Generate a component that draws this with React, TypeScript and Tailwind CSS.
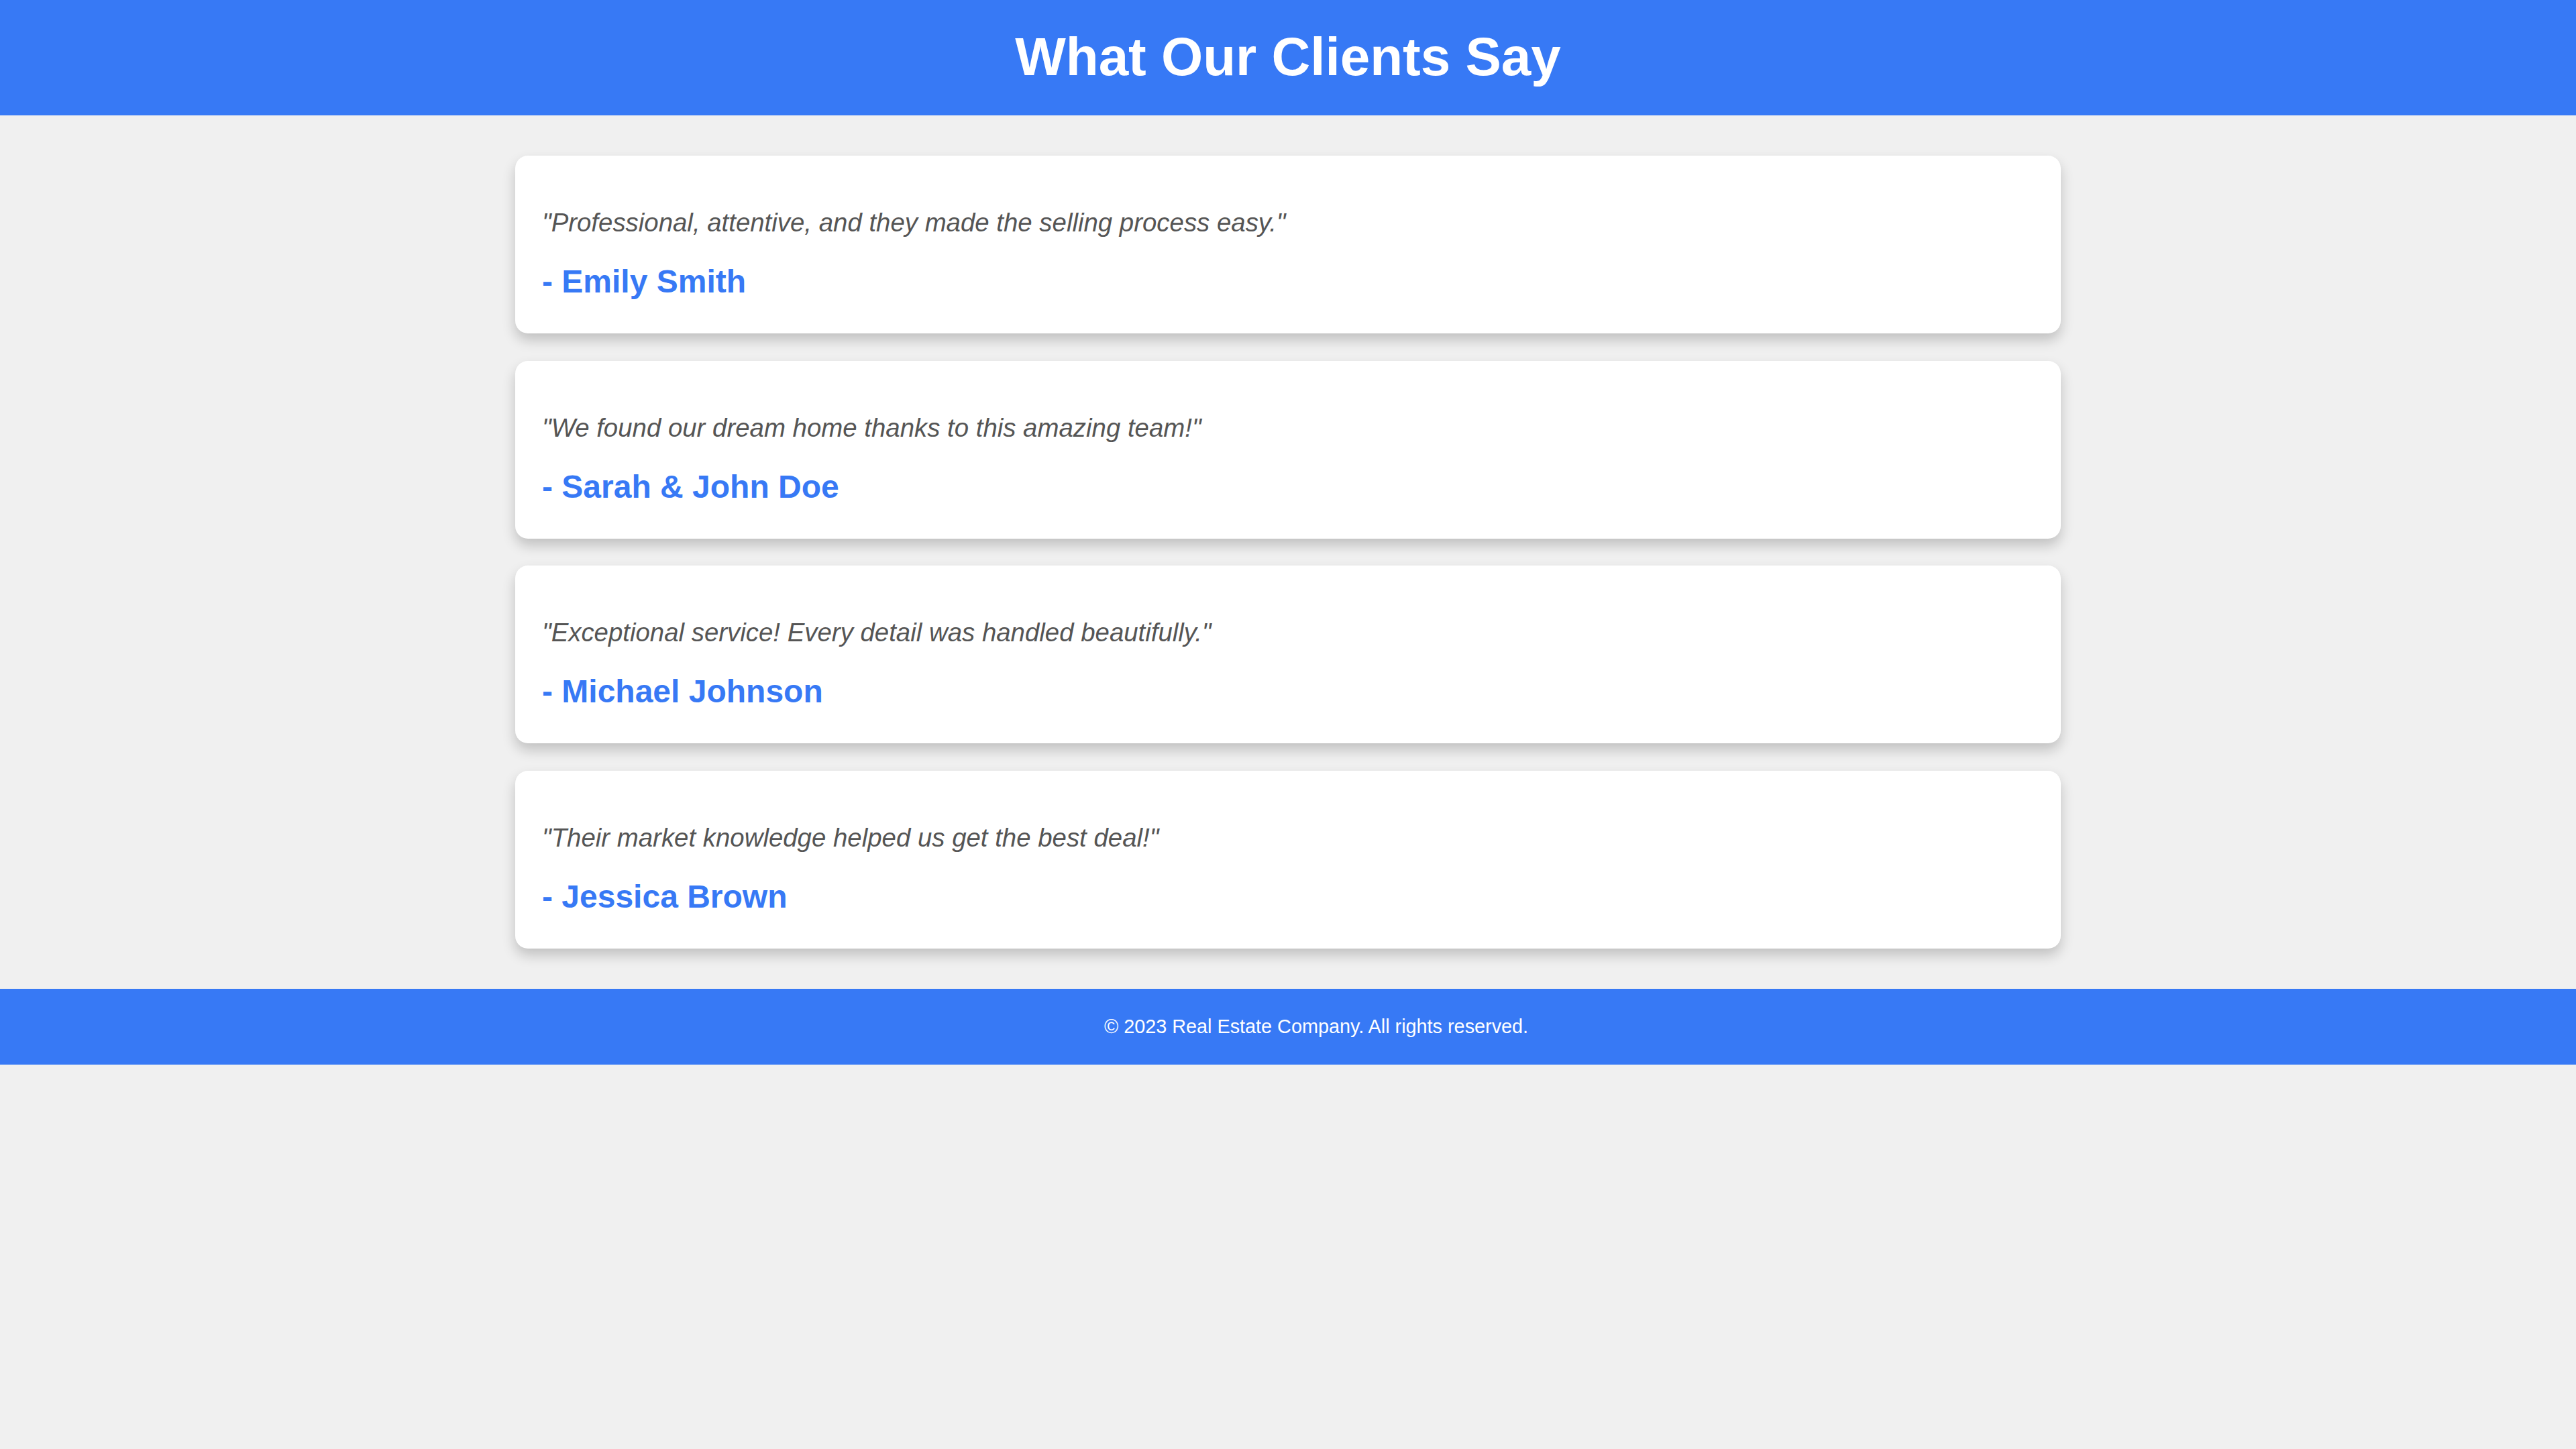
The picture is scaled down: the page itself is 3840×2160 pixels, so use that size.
const testimonials = [
  { quote: '"Professional, attentive, and they made the selling process easy."', name: "- Emily Smith" },
  { quote: '"We found our dream home thanks to this amazing team!"', name: "- Sarah & John Doe" },
  { quote: '"Exceptional service! Every detail was handled beautifully."', name: "- Michael Johnson" },
  { quote: '"Their market knowledge helped us get the best deal!"', name: "- Jessica Brown" },
];

function TestimonialCard({ quote, name }: { quote: string; name: string }) {
  return (
    <div className="bg-white rounded-[19px] shadow-[0_10px_19px_rgba(0,0,0,0.2)] px-[40px] pt-[78px] pb-[50px] flex flex-col gap-[38px]">
      <p className="text-[38.4px] leading-[44px] italic text-[#555555]">{quote}</p>
      <h3 className="text-[48px] leading-[55px] font-bold text-[#3779f5]">{name}</h3>
    </div>
  );
}

export default function App() {
  return (
    <div className="min-h-screen bg-[#f0f0f0] font-['Liberation_Sans',Arial,sans-serif]">
      {/* Header */}
      <header className="bg-[#3779f5] pt-[39px] pb-[41px] text-center">
        <h1 className="text-[80px] leading-[92px] font-bold text-white">What Our Clients Say</h1>
      </header>

      {/* Testimonials */}
      <main className="max-w-[2304px] mx-auto py-[60px] flex flex-col gap-[40.5px]">
        {testimonials.map((t) => (
          <TestimonialCard key={t.name} quote={t.quote} name={t.name} />
        ))}
      </main>

      {/* Footer */}
      <footer className="bg-[#3779f5] py-[40px] pl-[84px] text-center">
        <p className="text-[28.8px] leading-[33px] text-white">© 2023 Real Estate Company. All rights reserved.</p>
      </footer>
    </div>
  );
}
